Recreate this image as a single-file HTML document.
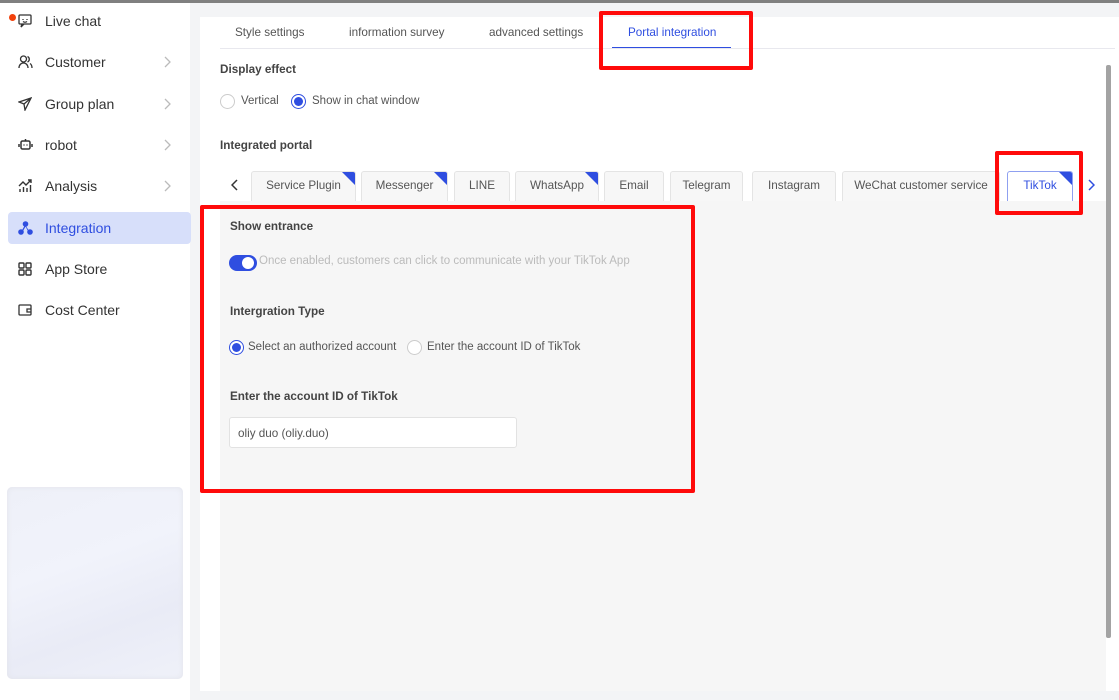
<!DOCTYPE html>
<html><head><meta charset="utf-8"><style>
*{box-sizing:border-box;margin:0;padding:0}
body{width:1119px;height:700px;overflow:hidden;background:#f3f4f6;font-family:"Liberation Sans",sans-serif;position:relative;color:#333}
.abs{position:absolute}
.topbar{left:0;top:0;width:1119px;height:3px;background:#808080}
.side{left:0;top:3px;width:190px;height:697px;background:#fff}
.nav{position:absolute;left:8px;width:183px;height:32px;font-size:14px;color:#333;display:flex;align-items:center;padding-left:37px;border-radius:4px}
.nav.act{background:#d7dffa;color:#2f4ee0}
.nav svg{position:absolute;left:10px;top:9px}
.nav .ch{position:absolute;left:155px;top:10px}
.main{left:200px;top:17px;width:919px;height:674px;background:#fff}
.tt{position:absolute;top:26px;font-size:11.7px;color:#555}
.lbl{position:absolute;font-size:11.7px;font-weight:bold;color:#444}
.radio{position:absolute;width:15px;height:15px;border:1px solid #ccc;border-radius:50%;background:#fff}
.radio.on{border:1px solid #2f4ee0}
.radio.on::after{content:"";position:absolute;left:2px;top:2px;width:9px;height:9px;border-radius:50%;background:#2f4ee0}
.rt{position:absolute;font-size:11.5px;color:#555}
.tab{position:absolute;top:171px;height:30px;border:1px solid #e4e4e4;border-bottom:none;border-radius:3px 3px 0 0;background:#f7f7f7;font-size:11.7px;color:#555;text-align:center;line-height:27px;overflow:hidden}
.tab .cor{position:absolute;right:0;top:0;width:0;height:0;border-top:13px solid #2f4ee0;border-left:13px solid transparent}
.red{position:absolute;border:4px solid #ff0a0a;border-radius:2px}
</style></head><body>
<div class="abs topbar"></div>
<div class="abs side">
 <div class="nav" style="top:2px"><span class="abs" style="left:1px;top:9px;width:7px;height:7px;border-radius:50%;background:#f2410c"></span><svg width="14" height="14" viewBox="0 0 14 14" fill="none" stroke="#333" stroke-width="1.3"><rect x="1" y="1" width="12" height="9" rx="1"/><path d="M5 5v1M9 5v1M5 7.5q2 1.5 4 0M4 10l-1 3 3-3"/></svg>Live chat</div>
 <div class="nav" style="top:43px"><svg width="15" height="14" viewBox="0 0 15 14" fill="none" stroke="#333" stroke-width="1.3"><circle cx="5.5" cy="4" r="3"/><path d="M1 13c0-3 2-5 4.5-5S10 10 10 13M9.5 1.5a3 3 0 010 5.5M12 8.5c1.5 1 2 2.5 2 4.5"/></svg>Customer<svg class="ch" width="8" height="12" viewBox="0 0 8 12" fill="none" stroke="#bbb" stroke-width="1.3"><path d="M2 1l5 5-5 5"/></svg></div>
 <div class="nav" style="top:85px"><svg width="14" height="14" viewBox="0 0 14 14" fill="none" stroke="#333" stroke-width="1.3"><path d="M13 1L1 5l5 2 1 6z M6 7l7-6"/></svg>Group plan<svg class="ch" width="8" height="12" viewBox="0 0 8 12" fill="none" stroke="#bbb" stroke-width="1.3"><path d="M2 1l5 5-5 5"/></svg></div>
 <div class="nav" style="top:126px"><svg width="15" height="14" viewBox="0 0 15 14" fill="none" stroke="#333" stroke-width="1.5"><rect x="3" y="3" width="9" height="8" rx="1.5"/><path d="M7.5 1v2M1 6v3M14 6v3M6 6.5v1M9 6.5v1"/></svg>robot<svg class="ch" width="8" height="12" viewBox="0 0 8 12" fill="none" stroke="#bbb" stroke-width="1.3"><path d="M2 1l5 5-5 5"/></svg></div>
 <div class="nav" style="top:167px"><svg width="15" height="14" viewBox="0 0 15 14" fill="none" stroke="#333" stroke-width="1.4"><path d="M2 13v-3M5.5 13V8M9 13V9M12.5 13V6M1 7l4-4 3 3 5-5M10 1h3v3"/></svg>Analysis<svg class="ch" width="8" height="12" viewBox="0 0 8 12" fill="none" stroke="#bbb" stroke-width="1.3"><path d="M2 1l5 5-5 5"/></svg></div>
 <div class="nav act" style="top:209px"><svg width="15" height="14" viewBox="0 0 15 14" fill="#2f4ee0"><circle cx="7.5" cy="3" r="2.8"/><circle cx="3" cy="11" r="2.8"/><circle cx="12" cy="11" r="2.8"/><path d="M7 4l-4 7h1.4l3.1-5.4 3.1 5.4H12z"/></svg>Integration</div>
 <div class="nav" style="top:250px"><svg width="14" height="14" viewBox="0 0 14 14" fill="none" stroke="#333" stroke-width="1.4"><rect x="1" y="1" width="5" height="5" rx="1"/><rect x="8" y="1" width="5" height="5" rx="1"/><rect x="1" y="8" width="5" height="5" rx="1"/><rect x="8" y="8" width="5" height="5" rx="1"/></svg>App Store</div>
 <div class="nav" style="top:291px"><svg width="14" height="14" viewBox="0 0 14 14" fill="none" stroke="#333" stroke-width="1.3"><rect x="1" y="2" width="12" height="10" rx="1"/><path d="M13 6H9v3h4"/></svg>Cost Center</div>
 <div class="abs" style="left:7px;top:484px;width:176px;height:192px;border-radius:5px;background:linear-gradient(160deg,#eef0f8,#f1f3fb 40%,#e9ebf6 70%,#eff1f9);box-shadow:inset 0 0 6px #e2e3ea"></div>
</div>
<div class="abs main">
 <div class="tt" style="left:35px;top:9px">Style settings</div>
 <div class="tt" style="left:149px;top:9px">information survey</div>
 <div class="tt" style="left:289px;top:9px">advanced settings</div>
 <div class="tt" style="left:428px;top:9px;color:#2f4ee0">Portal integration</div>
 <div class="abs" style="left:412px;top:30px;width:119px;height:2px;background:#2f4ee0"></div>
 <div class="abs" style="left:20px;top:31px;width:895px;height:1px;background:#e8e8ee"></div>
 <div class="lbl" style="left:20px;top:46px">Display effect</div>
 <div class="radio" style="left:20px;top:77px"></div><div class="rt" style="left:41px;top:78px">Vertical</div>
 <div class="radio on" style="left:91px;top:77px"></div><div class="rt" style="left:112px;top:78px">Show in chat window</div>
 <div class="lbl" style="left:20px;top:122px">Integrated portal</div>
 <svg class="abs" style="left:31px;top:162px" width="8" height="12" viewBox="0 0 8 12" fill="none" stroke="#333" stroke-width="1.5"><path d="M6 1L1 6l5 5"/></svg>
 <svg class="abs" style="left:887px;top:162px" width="8" height="12" viewBox="0 0 8 12" fill="none" stroke="#2f4ee0" stroke-width="1.5"><path d="M2 1l5 5-5 5"/></svg>
 <div class="abs" style="left:20px;top:184px;width:886px;height:490px;background:#f6f6f6"></div>
 <div class="abs" style="left:906px;top:48px;width:5px;height:573px;background:#a3a3a3;border-radius:2px"></div>
 <div class="lbl" style="left:30px;top:203px">Show entrance</div>
 <div class="abs" style="left:29px;top:238px;width:28px;height:16px;border-radius:8px;background:#2f4ee0"><div class="abs" style="left:13px;top:2px;width:12px;height:12px;border-radius:50%;background:#fff"></div></div>
 <div class="rt" style="left:59px;top:238px;color:#bbb">Once enabled, customers can click to communicate with your TikTok App</div>
 <div class="lbl" style="left:30px;top:288px">Intergration Type</div>
 <div class="radio on" style="left:29px;top:323px"></div><div class="rt" style="left:48px;top:324px">Select an authorized account</div>
 <div class="radio" style="left:207px;top:323px"></div><div class="rt" style="left:227px;top:324px">Enter the account ID of TikTok</div>
 <div class="lbl" style="left:30px;top:373px">Enter the account ID of TikTok</div>
 <div class="abs" style="left:29px;top:400px;width:288px;height:31px;background:#fff;border:1px solid #e2e2e2;border-radius:3px;font-size:11.7px;color:#555;padding:9px 0 0 8px">oliy duo (oliy.duo)</div>
</div>
<div class="tab" style="left:251px;width:105px">Service Plugin<span class="cor"></span></div>
<div class="tab" style="left:361px;width:87px">Messenger<span class="cor"></span></div>
<div class="tab" style="left:454px;width:56px">LINE</div>
<div class="tab" style="left:515px;width:84px">WhatsApp<span class="cor"></span></div>
<div class="tab" style="left:604px;width:60px">Email</div>
<div class="tab" style="left:670px;width:73px">Telegram</div>
<div class="tab" style="left:752px;width:84px">Instagram</div>
<div class="tab" style="left:842px;width:158px">WeChat customer service</div>
<div class="tab" style="left:1007px;width:66px;border-color:#8fa0f0;background:#fff;color:#2f4ee0">TikTok<span class="cor"></span></div>
<div class="red" style="left:599px;top:11px;width:154px;height:59px"></div>
<div class="red" style="left:995px;top:151px;width:88px;height:64px"></div>
<div class="red" style="left:200px;top:205px;width:495px;height:288px"></div>
</body></html>
